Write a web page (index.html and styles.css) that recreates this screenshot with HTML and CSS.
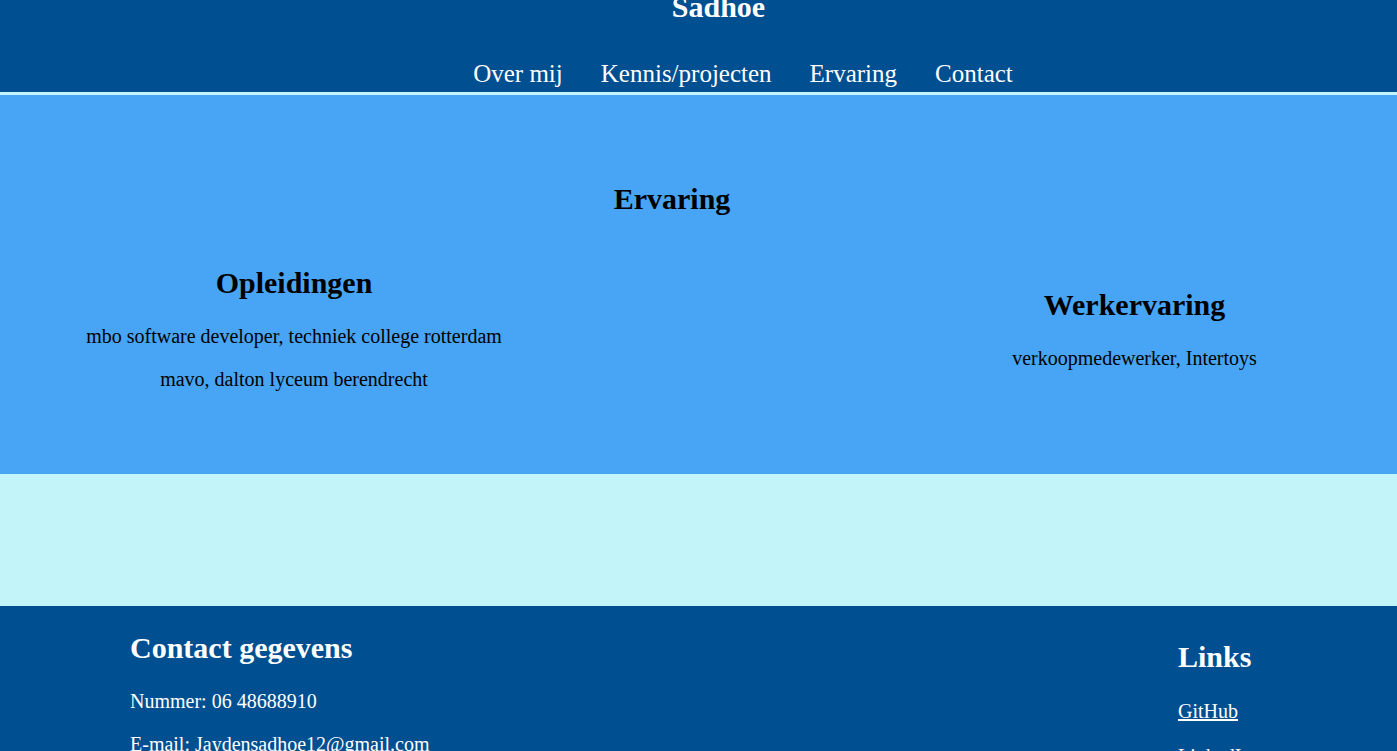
FILE: index.html
```html
<!DOCTYPE html>
<html lang="nl">
<head>
<meta charset="utf-8">
<title>Sadhoe - Ervaring</title>
<link rel="stylesheet" href="styles.css">
</head>
<body>
<header class="site-header">
  <h1 class="site-title">Sadhoe</h1>
  <nav>
    <ul class="nav-list">
      <li><a href="#">Over mij</a></li>
      <li><a href="#">Kennis/projecten</a></li>
      <li><a href="#">Ervaring</a></li>
      <li><a href="#">Contact</a></li>
    </ul>
  </nav>
</header>
<main>
  <section class="experience">
    <h2 class="section-title">Ervaring</h2>
    <div class="exp-row">
      <div class="exp-col exp-left">
        <h2>Opleidingen</h2>
        <p>mbo software developer, techniek college rotterdam</p>
        <p>mavo, dalton lyceum berendrecht</p>
      </div>
      <div class="exp-col exp-right">
        <h2>Werkervaring</h2>
        <p>verkoopmedewerker, Intertoys</p>
      </div>
    </div>
  </section>
  <section class="spacer"></section>
</main>
<footer class="site-footer">
  <div class="footer-col">
    <h2>Contact gegevens</h2>
    <p>Nummer: 06 48688910</p>
    <p>E-mail: Jaydensadhoe12@gmail.com</p>
  </div>
  <div class="footer-col footer-links">
    <h2>Links</h2>
    <p><a href="#">GitHub</a></p>
    <p class="second-link"><a href="#">LinkedIn</a></p>
  </div>
</footer>
</body>
</html>
```

FILE: styles.css
```css
html {
  overflow: hidden;
}

body {
  margin: 0;
  font-family: "Liberation Serif", "Times New Roman", serif;
  font-size: 20px;
  line-height: 23px;
  color: #000;
  background: #c2f4f9;
}

h1, h2 {
  font-size: 30px;
  line-height: 34px;
  font-weight: bold;
}

p {
  margin: 20px 0;
}

.site-header {
  display: flex;
  flex-direction: column;
  background: #004f91;
  color: #fff;
  border-bottom: 3px solid #c2f4f9;
  padding-bottom: 4px;
}

.site-title {
  margin: -10px 0 0;
  padding-left: 40px;
  text-align: center;
}

.nav-list {
  display: flex;
  justify-content: center;
  gap: 38px;
  list-style: none;
  margin: 35px 0 0;
  padding: 0 0 0 89px;
  font-size: 25px;
  line-height: 29px;
}

.nav-list a {
  color: #fff;
  text-decoration: none;
}

.experience {
  background: #48a5f5;
  padding: 87px 0 83px;
}

.section-title {
  margin: 0;
  padding-right: 53px;
  text-align: center;
}

.exp-row {
  display: flex;
  justify-content: space-between;
  align-items: center;
  margin-top: 50px;
}

.exp-col {
  text-align: center;
}

.exp-col h2 {
  margin: 0 0 25px;
}

.exp-col p:last-child {
  margin-bottom: 0;
}

.exp-left {
  width: 588px;
}

.exp-right {
  width: 525px;
}

.spacer {
  height: 132px;
  background: #c2f4f9;
}

.site-footer {
  display: flex;
  justify-content: space-between;
  background: #004f91;
  color: #fff;
  padding: 25px 0 40px 130px;
}

.footer-col h2 {
  margin: 0 0 25px;
}

.footer-col p:first-of-type {
  margin-top: 0;
}

.footer-links {
  width: 219px;
  padding-top: 9px;
}

.footer-links h2 {
  margin-bottom: 26px;
}

.footer-links .second-link {
  margin-top: 22px;
}

.footer-links a {
  color: #fff;
  text-decoration: underline;
}
```
